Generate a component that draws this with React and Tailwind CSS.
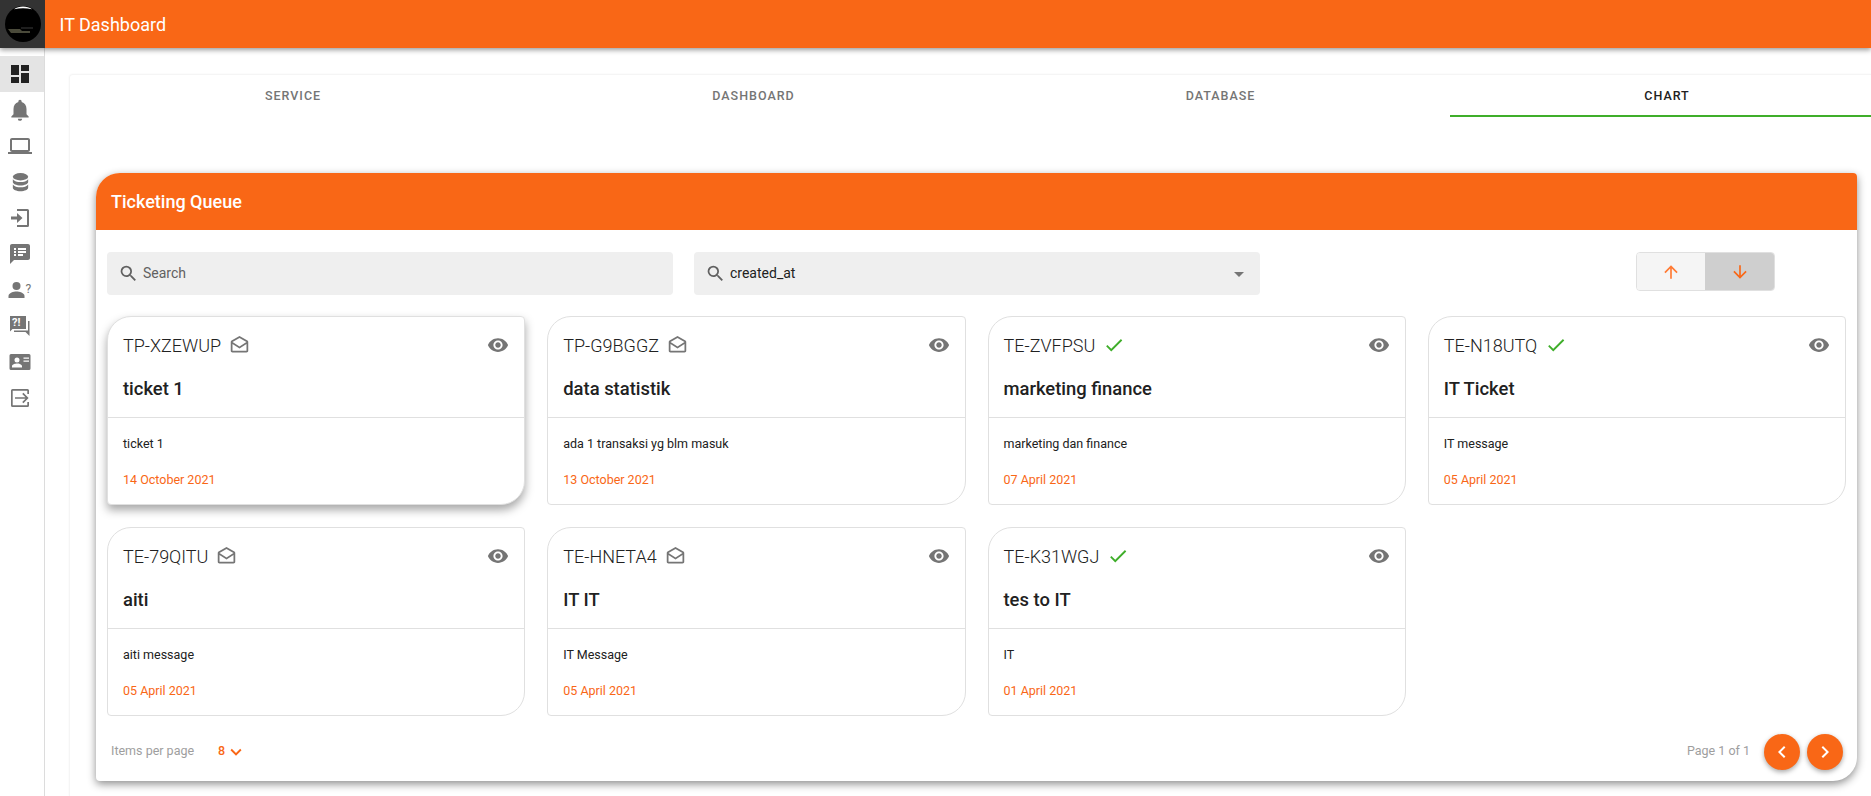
import {
  MdDashboard,
  MdNotifications,
  MdLaptop,
  MdSpeakerNotes,
  MdSearch,
  MdArrowDropDown,
  MdArrowUpward,
  MdArrowDownward,
  MdOutlineDrafts,
  MdCheck,
  MdVisibility,
  MdKeyboardArrowDown,
  MdChevronLeft,
  MdChevronRight,
} from "react-icons/md";

const TICKETS = [
  { id: "TP-XZEWUP", title: "ticket 1", message: "ticket 1", date: "14 October 2021", done: false, hovered: true },
  { id: "TP-G9BGGZ", title: "data statistik", message: "ada 1 transaksi yg blm masuk", date: "13 October 2021", done: false },
  { id: "TE-ZVFPSU", title: "marketing finance", message: "marketing dan finance", date: "07 April 2021", done: true },
  { id: "TE-N18UTQ", title: "IT Ticket", message: "IT message", date: "05 April 2021", done: true },
  { id: "TE-79QITU", title: "aiti", message: "aiti message", date: "05 April 2021", done: false },
  { id: "TE-HNETA4", title: "IT IT", message: "IT Message", date: "05 April 2021", done: false },
  { id: "TE-K31WGJ", title: "tes to IT", message: "IT", date: "01 April 2021", done: true },
];

function Logo() {
  return (
    <svg viewBox="0 0 36 36" className="h-[36px] w-[36px]">
      <circle cx="18" cy="18" r="18" fill="#000" />
      <path d="M9 3.200C11.500 1.500 14.500 .5 18 .5s6.500 1 9 2.700C24 2.500 21 2.200 18 2.200s-6 .3-9 1z" fill="#fff" />
      <path d="M3 23h12l2 2h8v2H6z" fill="#4a4a3a" />
      <path d="M16 22h12" stroke="#666" strokeWidth="0.6" />
    </svg>
  );
}

function DatabaseIcon() {
  return (
    <svg viewBox="0 0 24 24" className="h-[23px] w-[23px] fill-current">
      <ellipse cx="12" cy="6" rx="8" ry="3.800" />
      <path d="M4 8.500v3c0 2 3.600 3.600 8 3.600s8-1.600 8-3.600v-3c-1.400 2-4.600 3-8 3s-6.600-1-8-3z" />
      <path d="M4 14v3.500c0 2 3.600 3.600 8 3.600s8-1.600 8-3.600V14c-1.400 2-4.600 3-8 3s-6.600-1-8-3z" />
    </svg>
  );
}

function LoginIcon() {
  return (
    <svg viewBox="0 0 24 24" className="h-[24px] w-[24px] fill-current">
      <path d="M9 3h10.500A1.500 1.500 0 0 1 21 4.500v15a1.500 1.500 0 0 1-1.500 1.500H9v-2h10V5H9V3z" />
      <path d="M3 10.500h6V7l5.500 5L9 17v-3.500H3v-3z" />
    </svg>
  );
}

function LogoutIcon() {
  return (
    <svg viewBox="0 0 24 24" className="h-[24px] w-[24px] fill-current">
      <path d="M4.500 3h15A1.500 1.500 0 0 1 21 4.500V8h-1.700V4.800H4.700v14.400h14.600V16H21v3.500a1.500 1.500 0 0 1-1.500 1.500h-15A1.500 1.500 0 0 1 3 19.500v-15A1.500 1.500 0 0 1 4.500 3z" />
      <path d="M7 11.200h10.500L14.200 8l1.200-1.200 5.200 5.200-5.200 5.200-1.200-1.200 3.300-3.200H7v-1.600z" />
    </svg>
  );
}

function PersonHelpIcon() {
  return (
    <svg viewBox="0 0 24 24" className="h-[24px] w-[24px] fill-current">
      <circle cx="8.500" cy="8" r="4" />
      <path d="M0.500 20v-2c0-3 5.300-4.400 8-4.400s8 1.400 8 4.400v2h-16z" />
      <text x="17.500" y="15" fontSize="12" fontFamily="Roboto, sans-serif">?</text>
    </svg>
  );
}

function QuestionChatIcon() {
  return (
    <svg viewBox="0 0 24 24" className="h-[24px] w-[24px] fill-current">
      <path d="M2 2h16v13H4.500L2 17.500V2z" />
      <path d="M20 7h1.500v15L17.500 18H6v-1.500h14V7z" />
      <text x="4" y="12" fontSize="11" fontWeight="700" fontFamily="Roboto, sans-serif" fill="#fff">?!</text>
    </svg>
  );
}

function ContactCardIcon() {
  return (
    <svg viewBox="0 0 24 24" className="h-[24px] w-[24px] fill-current">
      <path fillRule="evenodd" d="M3 4h18a1.500 1.500 0 0 1 1.500 1.500v13A1.500 1.500 0 0 1 21 20H3a1.500 1.500 0 0 1-1.500-1.500v-13A1.500 1.500 0 0 1 3 4zm6 3.500a2.500 2.500 0 1 0 0 5 2.500 2.500 0 0 0 0-5zM4 17.500h10V16c0-1.700-3.300-2.600-5-2.600S4 14.300 4 16v1.500zM15.500 7.500v1.300H21V7.500h-5.500zm0 3v1.300H21v-1.300h-5.500z" />
    </svg>
  );
}

const NAV_ICONS = [
  <MdDashboard size={24} />,
  <MdNotifications size={26} />,
  <MdLaptop size={24} />,
  <DatabaseIcon />,
  <LoginIcon />,
  <MdSpeakerNotes size={24} />,
  <PersonHelpIcon />,
  <QuestionChatIcon />,
  <ContactCardIcon />,
  <LogoutIcon />,
];

const TABS = [
  { label: "SERVICE", width: "w-[446px]" },
  { label: "DASHBOARD", width: "w-[475px]" },
  { label: "DATABASE", width: "w-[459px]" },
  { label: "CHART", width: "w-[434px]", active: true },
];

function TicketCard({ ticket }) {
  const shadow = ticket.hovered ? "shadow-[0_5px_10px_rgba(0,0,0,0.35)]" : "";
  return (
    <div className={`h-[189px] rounded-tl-[24px] rounded-tr-[4px] rounded-bl-[4px] rounded-br-[24px] border border-[#e0e0e0] bg-white ${shadow}`}>
      <div className="flex h-[101px] flex-col border-b border-[#e0e0e0] px-[15px]">
        <div className="flex h-[56px] items-center justify-between">
          <div className="flex items-center gap-[8px]">
            <span className="text-[18px] font-light text-[#212121]">{ticket.id}</span>
            {ticket.done ? (
              <MdCheck size={22} className="text-[#3fae2a]" />
            ) : (
              <MdOutlineDrafts size={21} className="text-[#757575]" />
            )}
          </div>
          <MdVisibility size={22} className="text-[#757575]" />
        </div>
        <div className="mt-[4px] text-[18.4px] font-medium leading-[24px] text-[#212121]">{ticket.title}</div>
      </div>
      <div className="px-[15px]">
        <div className="mt-[17px] text-[12.5px] leading-[18px] text-[#212121]">{ticket.message}</div>
        <div className="mt-[18px] text-[12.5px] leading-[18px] text-[#f96716]">{ticket.date}</div>
      </div>
    </div>
  );
}

export default function App() {
  return (
    <div className="relative h-[796px] w-[1871px] overflow-hidden bg-white font-['Roboto',sans-serif]">
      <header className="relative z-10 flex h-[48px] items-center bg-[#f96716] shadow-[0_2px_5px_rgba(0,0,0,0.4)]">
        <div className="flex h-full w-[45px] items-center justify-center bg-[#333333]">
          <Logo />
        </div>
        <h1 className="ml-[14.5px] text-[18px] text-white">IT Dashboard</h1>
      </header>

      <div className="flex h-[748px]">
        <nav className="flex w-[45px] shrink-0 flex-col border-r border-[#dcdcdc] pt-[8px] text-[#757575]">
          {NAV_ICONS.map((icon, i) => (
            <div key={i} className={`flex h-[36px] items-center justify-center pr-[4px] ${i === 0 ? "bg-[#e4e4e4] text-[#212121]" : ""}`}>
              {icon}
            </div>
          ))}
        </nav>

        <main className="ml-[24px] mt-[26px] min-w-0 flex-1 rounded-tl-[4px] border-l border-t border-[#f5f5f5] shadow-[0_0_2px_rgba(0,0,0,0.05)]">
          <div className="flex h-[42px] w-[1814px]">
            {TABS.map((tab) => (
              <div
                key={tab.label}
                className={`flex items-center justify-center text-[12.5px] font-medium tracking-[1px] ${tab.width} ${
                  tab.active ? "border-b-2 border-[#3fae2a] pt-[2px] text-[#212121]" : "text-[#757575]"
                }`}
              >
                {tab.label}
              </div>
            ))}
          </div>

          <section className="ml-[26px] mt-[56px] w-[1761px] rounded-tl-[24px] rounded-tr-[4px] rounded-bl-[4px] rounded-br-[24px] bg-white shadow-[0_3px_8px_rgba(0,0,0,0.45)]">
            <div className="flex h-[57px] items-center rounded-tl-[24px] rounded-tr-[4px] bg-[#f96716] pl-[15px] text-[18px] font-medium text-white">
              Ticketing Queue
            </div>

            <div className="px-[11px] pt-[22px]">
              <div className="flex items-start">
                <div className="flex h-[43px] w-[566px] items-center rounded-[4px] bg-[#efefef] pl-[11px] text-[#616161]">
                  <MdSearch size={21} />
                  <span className="ml-[4px] text-[14px]">Search</span>
                </div>
                <div className="ml-[21px] flex h-[43px] w-[566px] items-center rounded-[4px] bg-[#efefef] pl-[11px] pr-[9px] text-[#616161]">
                  <MdSearch size={21} />
                  <span className="ml-[4px] flex-1 text-[14px] text-[#212121]">created_at</span>
                  <MdArrowDropDown size={24} className="text-[#757575]" />
                </div>
                <div className="ml-[376px] flex h-[39px] w-[139px] overflow-hidden rounded-[4px] border border-[#e0e0e0]">
                  <div className="flex w-[68px] items-center justify-center bg-[#f5f5f5] text-[#ff7a33]">
                    <MdArrowUpward size={20} />
                  </div>
                  <div className="flex flex-1 items-center justify-center bg-[#cfcfcf] text-[#f96716]">
                    <MdArrowDownward size={20} />
                  </div>
                </div>
              </div>

              <div className="mt-[21px] grid grid-cols-4 gap-x-[22px] gap-y-[22px]">
                {TICKETS.map((ticket) => (
                  <TicketCard key={ticket.id} ticket={ticket} />
                ))}
              </div>

              <div className="flex h-[65px] items-center justify-between pl-[4px] pr-[3px] pt-[6px]">
                <div className="flex items-center text-[12.5px] text-[#9e9e9e]">
                  Items per page
                  <span className="ml-[24px] font-medium text-[#f96716]">8</span>
                  <MdKeyboardArrowDown size={22} className="text-[#f96716]" />
                </div>
                <div className="flex items-center text-[12.5px] text-[#9e9e9e]">
                  Page 1 of 1
                  <button type="button" className="ml-[14px] flex h-[36px] w-[36px] items-center justify-center rounded-full bg-[#f96716] text-white shadow-[0_2px_5px_rgba(0,0,0,0.35)]">
                    <MdChevronLeft size={24} />
                  </button>
                  <button type="button" className="ml-[7px] flex h-[36px] w-[36px] items-center justify-center rounded-full bg-[#f96716] text-white shadow-[0_2px_5px_rgba(0,0,0,0.35)]">
                    <MdChevronRight size={24} />
                  </button>
                </div>
              </div>
            </div>
          </section>
        </main>
      </div>
    </div>
  );
}
